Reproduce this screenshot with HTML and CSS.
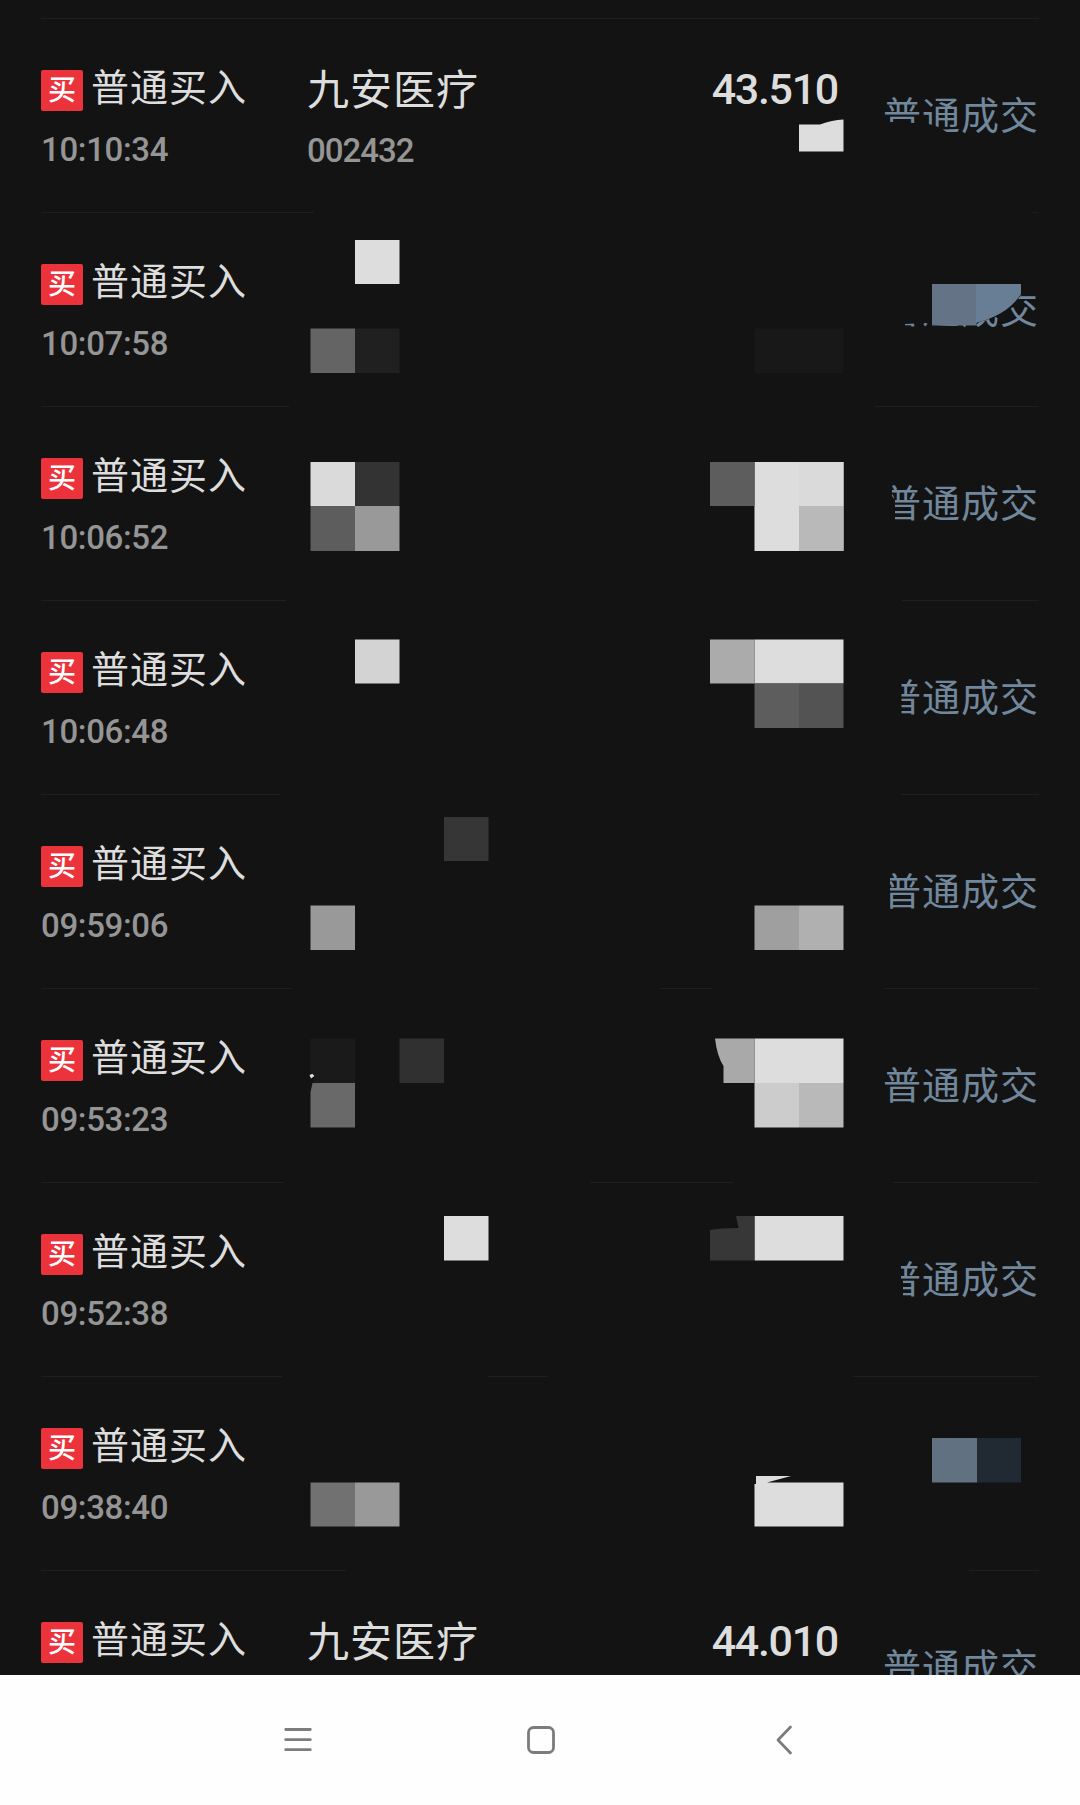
FILE: index.html
```html
<!DOCTYPE html>
<html lang="zh-CN">
<head>
  <meta charset="UTF-8" />
  <meta name="viewport" content="width=device-width, initial-scale=1.0"/>
  <title>成交记录</title>
  <link rel="stylesheet" href="styles.css">
</head>
<body>
  <main class="trade-list">
    <div class="trade-row">
      <div class="trade-type">
        <div class="type-line"><span class="badge">买</span><span class="type-name">普通买入</span></div>
        <div class="trade-time">10:10:34</div>
      </div>
      <div class="stock">
        <div class="stock-name">九安医疗</div>
        <div class="stock-code">002432</div>
      </div>
      <div class="price">43.510</div>
      <div class="status">普通成交</div>
    </div>
    <div class="trade-row">
      <div class="trade-type">
        <div class="type-line"><span class="badge">买</span><span class="type-name">普通买入</span></div>
        <div class="trade-time">10:07:58</div>
      </div>
      <div class="stock"></div>
      <div class="price"></div>
      <div class="status">普通成交</div>
    </div>
    <div class="trade-row">
      <div class="trade-type">
        <div class="type-line"><span class="badge">买</span><span class="type-name">普通买入</span></div>
        <div class="trade-time">10:06:52</div>
      </div>
      <div class="stock"></div>
      <div class="price"></div>
      <div class="status">普通成交</div>
    </div>
    <div class="trade-row">
      <div class="trade-type">
        <div class="type-line"><span class="badge">买</span><span class="type-name">普通买入</span></div>
        <div class="trade-time">10:06:48</div>
      </div>
      <div class="stock"></div>
      <div class="price"></div>
      <div class="status">普通成交</div>
    </div>
    <div class="trade-row">
      <div class="trade-type">
        <div class="type-line"><span class="badge">买</span><span class="type-name">普通买入</span></div>
        <div class="trade-time">09:59:06</div>
      </div>
      <div class="stock"></div>
      <div class="price"></div>
      <div class="status">普通成交</div>
    </div>
    <div class="trade-row">
      <div class="trade-type">
        <div class="type-line"><span class="badge">买</span><span class="type-name">普通买入</span></div>
        <div class="trade-time">09:53:23</div>
      </div>
      <div class="stock"></div>
      <div class="price"></div>
      <div class="status">普通成交</div>
    </div>
    <div class="trade-row">
      <div class="trade-type">
        <div class="type-line"><span class="badge">买</span><span class="type-name">普通买入</span></div>
        <div class="trade-time">09:52:38</div>
      </div>
      <div class="stock"></div>
      <div class="price"></div>
      <div class="status">普通成交</div>
    </div>
    <div class="trade-row">
      <div class="trade-type">
        <div class="type-line"><span class="badge">买</span><span class="type-name">普通买入</span></div>
        <div class="trade-time">09:38:40</div>
      </div>
      <div class="stock"></div>
      <div class="price"></div>
      <div class="status"></div>
    </div>
    <div class="trade-row">
      <div class="trade-type">
        <div class="type-line"><span class="badge">买</span><span class="type-name">普通买入</span></div>
      </div>
      <div class="stock">
        <div class="stock-name">九安医疗</div>
      </div>
      <div class="price">44.010</div>
      <div class="status">普通成交</div>
    </div>

    <!-- mosaic that hides the private columns -->
    <svg class="mosaic" viewBox="0 0 1080 1675" aria-hidden="true">
      <g fill="#131313">
        <path d="M314 210h718v5H314zM289 404h586v5H289zM286 598h616v5H286zM280 792h621v5H280z"/>
        <path d="M292 986h368v5H292zM712 986h172v5H712zM284 1180h306v5H284zM733 1180h160v5H733z"/>
        <path d="M282 1374h206v5H282zM548 1374h305v5H548zM346 1568h623v5H346z"/>
        <path d="M880 121.500L915 123L931 124.500L941 128L945 131L950 134V140H880z"/>
        <path d="M880 284H1040V295H1021Q1008 316 972 324L932 326L926 323L905 324V332H880z"/>
        <path d="M880 480H892V496L895 500V525H880zM880 674H901.500V720H880zM880 868H890V915H880zM880 1256H901V1280H903V1302H880z"/>
      </g>
      <g fill="#ddd">
        <path d="M799 124.500H820Q832 120 843.500 119.500V151.500H799z"/>
        <path d="M355 240h44.500v44H355z"/>
        <path d="M754.500 462h89v89h-89z"/>
        <path d="M754.500 639.500h89v44h-89z"/>
        <path d="M754.500 1038.500h89v44.500h-89z"/>
        <path d="M444 1216h44.500v44.500H444zM754.500 1216h89v44.500h-89z"/>
        <path d="M754.500 1484H756V1476H791L767 1482.500H843.500V1526.500H754.500z"/>
        <path d="M309.500 1075l3.500-1.500l1.500 2.500l-3.500 2.500z"/>
      </g>
      <path fill="#646464" d="M310.500 328.500H355V373H310.500z"/>
      <path fill="#202020" d="M355 328.500h44.500V373H355z"/>
      <path fill="#181818" d="M754.500 328.500h89V373h-89z"/>
      <path fill="#647385" d="M932 284H976.500V325.500H932z"/>
      <path fill="#687e95" d="M976 284H1021V294Q1008 315 976 323z"/>
      <path fill="#dadada" d="M310.500 462H355V506H310.500zM799 462h44.500V506H799z"/>
      <path fill="#333" d="M355 462h44.500V506H355z"/>
      <path fill="#5d5d5d" d="M310.500 506H355V551H310.500zM710 462H754.500V506H710zM754.500 683.500H799V728H754.500z"/>
      <path fill="#999" d="M355 506h44.500V551H355zM310.500 905.500H355V950H310.500zM355 1482.500h44.500V1526.500H355z"/>
      <path fill="#b9b9b9" d="M799 506h44.500V551H799zM799 1083h44.500V1127.500H799z"/>
      <path fill="#d3d3d3" d="M355 639.500h44.500V683.500H355z"/>
      <path fill="#ababab" d="M710 639.500H754.500V683.500H710z"/>
      <path fill="#535353" d="M799 683.500h44.500V728H799z"/>
      <path fill="#363636" d="M444 817h44.500V861H444z"/>
      <path fill="#9f9f9f" d="M754.500 905.500H799V950H754.500z"/>
      <path fill="#b0b0b0" d="M799 905.500h44.500V950H799z"/>
      <path fill="#1a1a1a" d="M310.500 1038.500H355V1083H313L314.500 1076L310.500 1072z"/>
      <path fill="#303030" d="M399.500 1038.500H444V1083H399.500z"/>
      <path fill="#696969" d="M312.500 1083H355V1127.500H310.500V1092z"/>
      <path fill="#a9a9a9" d="M715 1038.500H754.500V1083H723.500V1066Q717 1056 715 1038.500z"/>
      <path fill="#ccc" d="M754.500 1083H799V1127.500H754.500z"/>
      <path fill="#373737" d="M736 1216H754.500V1260.500H710V1230Q720 1228 738.500 1228z"/>
      <path fill="#717171" d="M310.500 1482.500H355V1526.500H310.500z"/>
      <path fill="#617182" d="M932 1438H977V1482.500H932z"/>
      <path fill="#212a32" d="M977 1438H1021V1482.500H977z"/>
    </svg>
  </main>

  <nav class="system-nav">
    <svg class="nav-icon" viewBox="0 0 32 32"><path d="M3.700 5.500H28.300M3.700 15.700H28.300M3.700 25.700H28.300"/></svg>
    <svg class="nav-icon" viewBox="0 0 32 32"><rect x="3.500" y="3.500" width="25" height="25" rx="5"/></svg>
    <svg class="nav-icon" viewBox="0 0 32 32"><path d="M22.500 3L10 16L22.500 29"/></svg>
  </nav>
</body>
</html>
```
FILE: styles.css
```css
:root {
  --bg: #131313;
  --line: #1f1f1f;
  --text: #dddddd;
  --muted: #959595;
  --blue: #71879c;
  --red: #ec333b;
}
* {
  margin: 0;
  padding: 0;
  box-sizing: border-box;
}
body {
  width: 1080px;
  background: var(--bg);
  color: var(--text);
  font-family: 'Roboto', 'Noto Sans CJK SC', sans-serif;
  overflow: hidden;
}
.trade-list {
  position: relative;
  height: 1675px;
  padding: 18px 41px 0;
  overflow: hidden;
}
.trade-row {
  display: grid;
  grid-template-columns: 266px 1fr 200px 200px;
  height: 194px;
  border-top: 1px solid var(--line);
}
.type-line {
  display: flex;
  align-items: center;
  height: 40px;
  margin-top: 49px;
}
.badge {
  width: 42px;
  height: 41px;
  margin: 5px 8px 0 0;
  border-radius: 2px;
  background: var(--red);
  color: #fff;
  font-size: 28px;
  font-weight: 500;
  line-height: 41px;
  text-align: center;
}
.type-name {
  font-size: 38px;
  letter-spacing: 1px;
  line-height: 40px;
  white-space: nowrap;
}
.trade-time,
.stock-code {
  color: var(--muted);
  font-size: 33px;
  font-weight: 500;
  line-height: 40px;
}
.trade-time {
  margin-top: 22px;
  letter-spacing: -0.35px;
}
.stock-name {
  margin-top: 50px;
  font-size: 42px;
  letter-spacing: 1px;
  line-height: 44px;
}
.stock-code {
  margin-top: 18px;
  letter-spacing: -1px;
}
.price {
  margin-top: 48px;
  padding-right: 1px;
  font-size: 43px;
  font-weight: 500;
  line-height: 44px;
  letter-spacing: -1.3px;
  text-align: right;
}
.status {
  margin-top: 77px;
  color: var(--blue);
  font-size: 38px;
  letter-spacing: 1px;
  line-height: 40px;
  text-align: right;
}
.mosaic {
  position: absolute;
  top: 0;
  left: 0;
  width: 1080px;
  height: 1675px;
}
.system-nav {
  display: flex;
  justify-content: center;
  align-items: center;
  gap: 211px;
  height: 130px;
  padding-left: 2px;
  background: #fefefe;
}
.nav-icon {
  width: 32px;
  height: 32px;
  fill: none;
  stroke: #7c7c7c;
  stroke-width: 2.8;
  stroke-linecap: round;
  stroke-linejoin: round;
}
```
